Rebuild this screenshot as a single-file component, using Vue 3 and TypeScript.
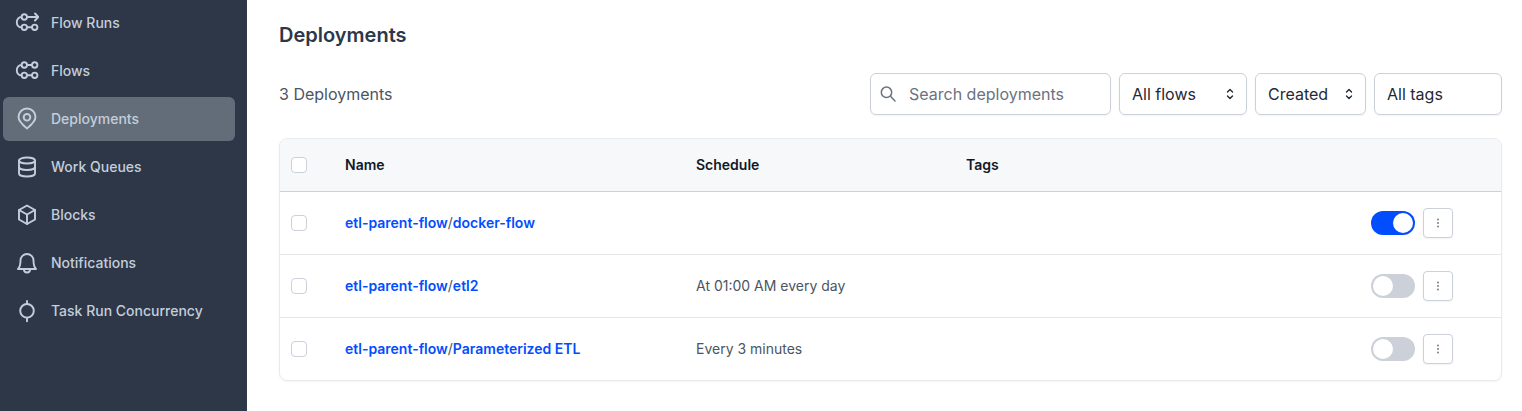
<script setup lang="ts">
interface NavItem {
  label: string;
  icon: string;
  active?: boolean;
}

interface Deployment {
  flow: string;
  name: string;
  schedule: string;
  enabled: boolean;
}

const navItems: NavItem[] = [
  { label: 'Flow Runs', icon: 'runs' },
  { label: 'Flows', icon: 'flows' },
  { label: 'Deployments', icon: 'pin', active: true },
  { label: 'Work Queues', icon: 'db' },
  { label: 'Blocks', icon: 'cube' },
  { label: 'Notifications', icon: 'bell' },
  { label: 'Task Run Concurrency', icon: 'node' },
];

const deployments: Deployment[] = [
  { flow: 'etl-parent-flow', name: 'docker-flow', schedule: '', enabled: true },
  { flow: 'etl-parent-flow', name: 'etl2', schedule: 'At 01:00 AM every day', enabled: false },
  { flow: 'etl-parent-flow', name: 'Parameterized ETL', schedule: 'Every 3 minutes', enabled: false },
];
</script>

<template>
  <div class="page">
    <aside class="sidebar">
      <a v-for="item in navItems" :key="item.label" class="nav-item" :class="{ active: item.active }">
        <svg class="nav-icon" viewBox="0 0 24 24" fill="none" stroke="currentColor" stroke-width="1.9" stroke-linecap="round" stroke-linejoin="round">
          <template v-if="item.icon === 'runs' || item.icon === 'flows'">
            <circle cx="9.3" cy="6" r="2.7" />
            <circle cx="9.3" cy="16.3" r="2.7" />
            <circle cx="19.7" cy="16.3" r="2.7" />
            <path d="M12 16.3h5M6.6 6C3.5 6 1.8 8.5 1.8 11.2s1.700 5.100 4.800 5.100" />
            <template v-if="item.icon === 'flows'">
              <circle cx="19.7" cy="6" r="2.7" />
              <path d="M12 6h5" />
            </template>
            <path v-else d="M12 6h11M20 2.500L23.300 6 20 9.500" />
          </template>
          <template v-else-if="item.icon === 'pin'">
            <path d="M12 21.500c-3-2.500-8.500-7-8.500-11.500a8.500 8.500 0 0 1 17 0c0 4.500-5.500 9-8.500 11.500z" />
            <circle cx="12" cy="10.300" r="3.300" />
          </template>
          <template v-else-if="item.icon === 'db'">
            <ellipse cx="12" cy="5.500" rx="8" ry="3" />
            <path d="M4 5.500v13c0 1.700 3.600 3 8 3s8-1.300 8-3v-13" />
            <path d="M4 12c0 1.700 3.600 3 8 3s8-1.300 8-3" />
          </template>
          <template v-else-if="item.icon === 'cube'">
            <path d="M12 2.500l8 4.500v9.500l-8 4.500-8-4.500V7l8-4.500z" />
            <path d="M4 7l8 4.500L20 7M12 11.500V21" />
          </template>
          <template v-else-if="item.icon === 'bell'">
            <path d="M12 3a6.500 6.500 0 0 0-6.500 6.500c0 4.500-.5 6.500-2.500 8.500h18c-2-2-2.500-4-2.500-8.500A6.500 6.500 0 0 0 12 3z" />
            <path d="M9 18v.5a3 3 0 0 0 6 0V18" />
          </template>
          <template v-else>
            <circle cx="12" cy="11.800" r="6.800" />
            <path d="M12 2v3M12 18.600v3.600" />
          </template>
        </svg>
        <span>{{ item.label }}</span>
      </a>
    </aside>

    <main class="content">
      <h1 class="title">Deployments</h1>

      <div class="toolbar">
        <span class="count">3 Deployments</span>
        <div class="filters">
          <div class="field search">
            <svg class="search-icon" viewBox="0 0 20 20" fill="none" stroke="currentColor" stroke-width="1.5" stroke-linecap="round">
              <circle cx="7.500" cy="8.300" r="5.200" />
              <path d="M11.500 12.300L16 17" />
            </svg>
            <span>Search deployments</span>
          </div>
          <div class="field select flows">
            <span>All flows</span>
            <svg class="chevrons" viewBox="0 0 12 16" fill="none" stroke="currentColor" stroke-width="1.4" stroke-linecap="round" stroke-linejoin="round">
              <path d="M3.500 6L6 3.500 8.500 6M3.500 10L6 12.500 8.500 10" />
            </svg>
          </div>
          <div class="field select created">
            <span>Created</span>
            <svg class="chevrons" viewBox="0 0 12 16" fill="none" stroke="currentColor" stroke-width="1.4" stroke-linecap="round" stroke-linejoin="round">
              <path d="M3.500 6L6 3.500 8.500 6M3.500 10L6 12.500 8.500 10" />
            </svg>
          </div>
          <div class="field tags"><span>All tags</span></div>
        </div>
      </div>

      <div class="table">
        <div class="row head">
          <span class="checkbox"></span>
          <span class="cell">Name</span>
          <span class="cell">Schedule</span>
          <span class="cell">Tags</span>
        </div>
        <div v-for="d in deployments" :key="d.name" class="row">
          <span class="checkbox"></span>
          <span class="cell name"><a>{{ d.flow }}</a><span class="slash">/</span><a>{{ d.name }}</a></span>
          <span class="cell">{{ d.schedule }}</span>
          <span></span>
          <div class="actions">
            <span class="toggle" :class="{ on: d.enabled }"><span class="knob"></span></span>
            <button type="button" class="menu-btn">
              <svg viewBox="0 0 4 12" width="4" height="12" fill="currentColor">
                <circle cx="2" cy="2.500" r="0.900" />
                <circle cx="2" cy="6" r="0.900" />
                <circle cx="2" cy="9.500" r="0.900" />
              </svg>
            </button>
          </div>
        </div>
      </div>
    </main>
  </div>
</template>

<style scoped>
.page {
  display: flex;
  height: 411px;
  overflow: hidden;
  background: #fff;
  font-family: Inter, "Noto Sans", sans-serif;
}

.sidebar {
  width: 247px;
  flex: none;
  box-sizing: border-box;
  background: #2d3748;
  padding: 1px 12px 0 3px;
  display: flex;
  flex-direction: column;
  gap: 4px;
}

.nav-item {
  height: 44px;
  display: flex;
  align-items: center;
  gap: 12px;
  padding-left: 12px;
  border-radius: 6px;
  color: #c4cedb;
  font-size: 14px;
  font-weight: 500;
  line-height: 20px;
}

.nav-item.active {
  background: #626d79;
}

.nav-icon {
  width: 24px;
  height: 24px;
  flex: none;
}

.content {
  flex: 1;
  min-width: 0;
  padding: 0 20px 0 32px;
}

.title {
  margin: 0;
  padding-top: 21px;
  font-size: 20px;
  line-height: 28px;
  font-weight: 600;
  color: #2d3748;
}

.toolbar {
  margin-top: 24px;
  display: flex;
  align-items: center;
  justify-content: space-between;
}

.count {
  font-size: 16px;
  line-height: 24px;
  color: #4b5563;
}

.filters {
  display: flex;
  gap: 8px;
}

.field {
  box-sizing: border-box;
  height: 42px;
  display: flex;
  align-items: center;
  border: 1px solid #cbd0d9;
  border-radius: 6px;
  box-shadow: 0 1px 2px rgba(0, 0, 0, 0.05);
  font-size: 16px;
  color: #1f2937;
  padding-left: 12px;
}

.search {
  width: 241px;
  padding-left: 8px;
  gap: 10px;
  color: #6b7280;
}

.search-icon {
  width: 20px;
  height: 20px;
  flex: none;
}

.select {
  justify-content: space-between;
  padding-right: 10px;
}

.flows {
  width: 128px;
}

.created {
  width: 111px;
}

.tags {
  width: 128px;
}

.chevrons {
  width: 12px;
  height: 16px;
}

.table {
  margin-top: 23px;
  width: 100%;
  box-sizing: border-box;
  border: 1px solid #e8eaee;
  border-radius: 8px;
  overflow: hidden;
  box-shadow: 0 1px 2px rgba(0, 0, 0, 0.05);
}

.row {
  height: 63px;
  box-sizing: border-box;
  display: grid;
  grid-template-columns: 54px 351px 270px 1fr auto;
  align-items: center;
  padding-left: 11px;
  border-top: 1px solid #e5e7eb;
  font-size: 14px;
  color: #4b5563;
}

.row.head {
  height: 53px;
  background: #f7f8fa;
  border-top: 0;
  border-bottom: 1px solid #cbd0d9;
  font-weight: 600;
  color: #111827;
  grid-template-columns: 54px 351px 270px 1fr;
}

.row.head + .row {
  border-top: 0;
  height: 62px;
}

.cell {
  padding-bottom: 2px;
}

.checkbox {
  width: 16px;
  height: 16px;
  box-sizing: border-box;
  border: 1px solid #cbd0d9;
  border-radius: 4px;
  background: #fff;
}

.name {
  font-weight: 600;
  color: #024dfd;
}

.slash {
  font-weight: 400;
  color: #4b5563;
}

.actions {
  display: flex;
  align-items: center;
  gap: 8px;
  padding-right: 48px;
}

.toggle {
  width: 44px;
  height: 24px;
  box-sizing: border-box;
  padding: 2px;
  border-radius: 12px;
  background: #cbd0d9;
  display: flex;
}

.toggle.on {
  background: #024dfd;
  justify-content: flex-end;
}

.knob {
  width: 20px;
  height: 20px;
  border-radius: 50%;
  background: #fff;
}

.menu-btn {
  width: 30px;
  height: 30px;
  box-sizing: border-box;
  padding: 0;
  display: flex;
  align-items: center;
  justify-content: center;
  background: #fff;
  border: 1px solid #cbd0d9;
  border-radius: 4px;
  box-shadow: 0 1px 2px rgba(0, 0, 0, 0.05);
  color: #6b7280;
}
</style>
